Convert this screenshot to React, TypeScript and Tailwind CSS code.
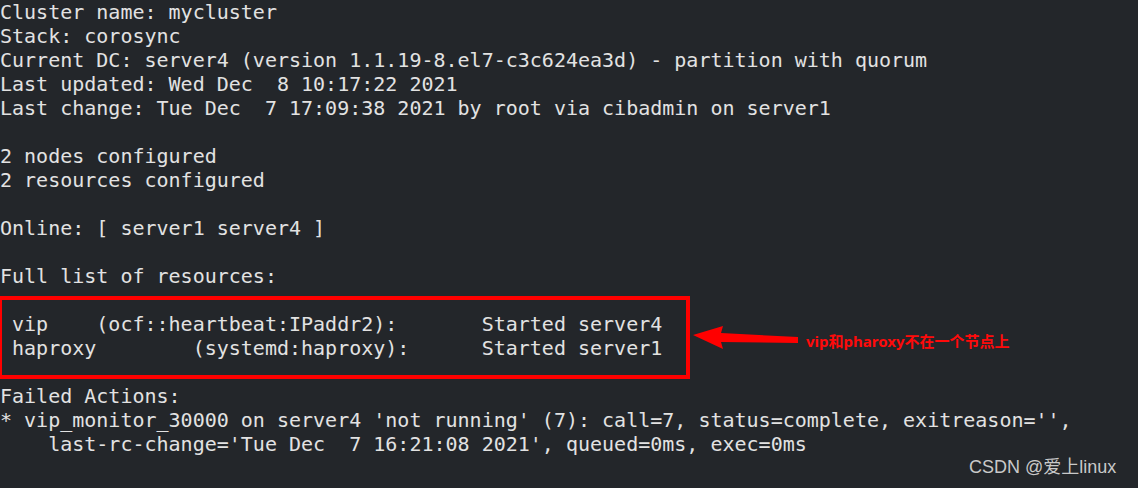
const lines = [
  "Cluster name: mycluster",
  "Stack: corosync",
  "Current DC: server4 (version 1.1.19-8.el7-c3c624ea3d) - partition with quorum",
  "Last updated: Wed Dec  8 10:17:22 2021",
  "Last change: Tue Dec  7 17:09:38 2021 by root via cibadmin on server1",
  "",
  "2 nodes configured",
  "2 resources configured",
  "",
  "Online: [ server1 server4 ]",
  "",
  "Full list of resources:",
  "",
  " vip    (ocf::heartbeat:IPaddr2):       Started server4",
  " haproxy        (systemd:haproxy):      Started server1",
  "",
  "Failed Actions:",
  "* vip_monitor_30000 on server4 'not running' (7): call=7, status=complete, exitreason='',",
  "    last-rc-change='Tue Dec  7 16:21:08 2021', queued=0ms, exec=0ms",
];

export default function App() {
  return (
    <div className="relative w-[1138px] h-[488px] overflow-hidden bg-[#23262a]">
      <pre className="m-0 text-[20px] leading-[24px] text-[#e2e2e2] font-['DejaVu_Sans_Mono',monospace] whitespace-pre">
        {lines.map((l, i) => (
          <div key={i} className="h-[24px]">
            {l}
          </div>
        ))}
      </pre>

      {/* annotation box */}
      <div className="absolute left-[-2px] top-[296px] w-[692px] h-[83px] border-4 border-[#ff0000]" />

      {/* arrow */}
      <svg className="absolute left-[690px] top-[322px]" width="115" height="30" viewBox="0 0 115 30">
        <polygon points="3,13 33,4 31,11 108,15 108,21 31,20 33,27" fill="#ff0000" />
      </svg>
      <div className="absolute left-[806px] top-[330px] text-[15px] leading-[22px] font-bold text-[#ff0a0a] font-['Noto_Sans','Noto_Sans_CJK_SC',sans-serif]">
        vip和pharoxy不在一个节点上
      </div>

      <div className="absolute left-[969px] top-[454px] text-[18px] leading-[26px] text-[#c9c9c9] font-['Liberation_Sans','Noto_Sans_CJK_SC',sans-serif]">
        CSDN @爱上linux
      </div>
    </div>
  );
}
